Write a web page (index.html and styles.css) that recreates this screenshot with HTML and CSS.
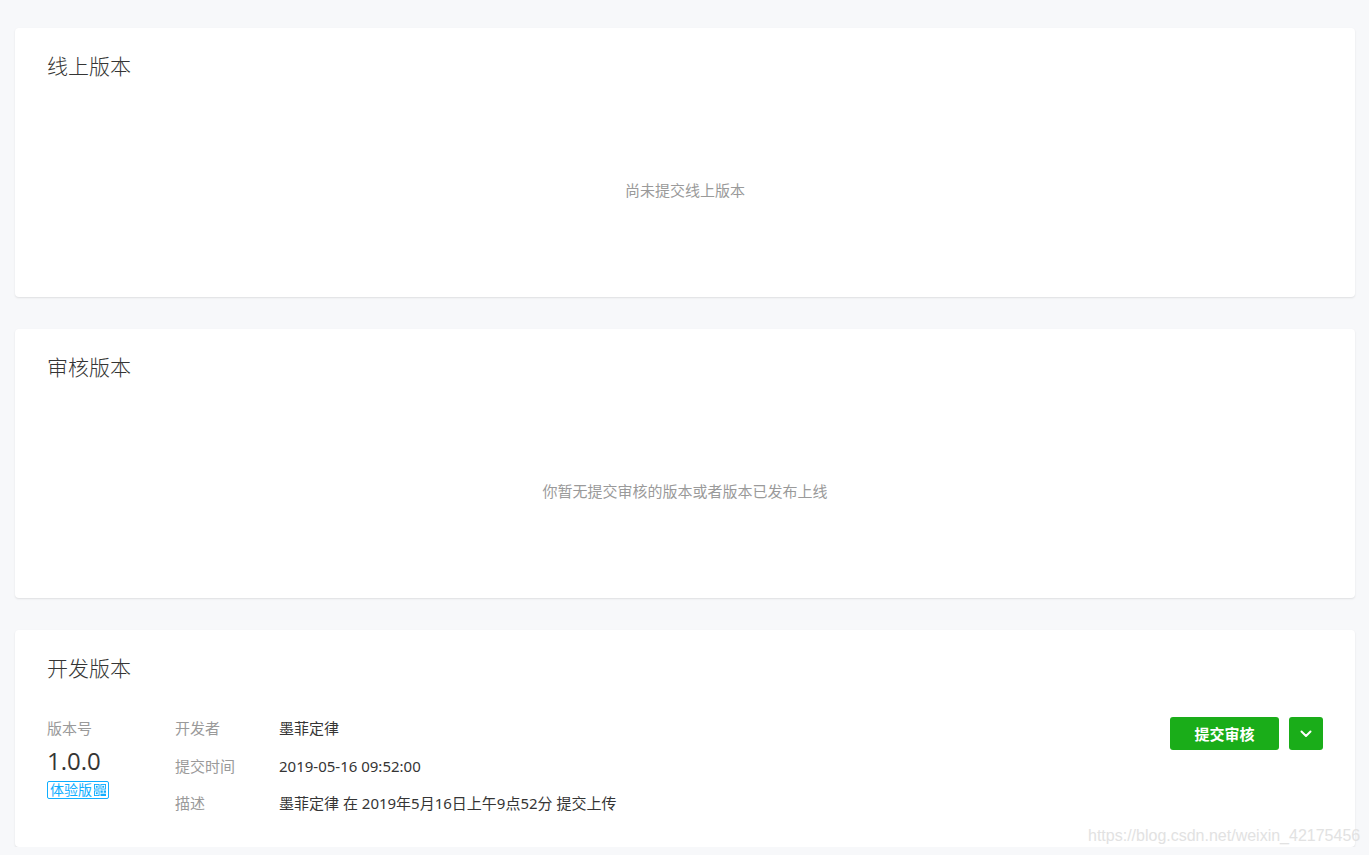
FILE: index.html
```html
<!DOCTYPE html>
<html lang="zh-CN">
<head>
<meta charset="utf-8">
<title>版本管理</title>
<link rel="stylesheet" href="styles.css">
</head>
<body>
<main class="page">
  <section class="card">
    <h2 class="card-title">线上版本</h2>
    <div class="empty">尚未提交线上版本</div>
  </section>
  <section class="card">
    <h2 class="card-title">审核版本</h2>
    <div class="empty">你暂无提交审核的版本或者版本已发布上线</div>
  </section>
  <section class="card card-dev">
    <h2 class="card-title">开发版本</h2>
    <div class="dev">
      <div class="ver">
        <div class="label">版本号</div>
        <div class="ver-num">1.0.0</div>
        <span class="badge">体验版
          <svg class="qr" width="12" height="12" viewBox="0 0 13 13">
            <rect x="0.5" y="0.5" width="5" height="5" fill="none" stroke="#10aeff" stroke-width="1"/>
            <rect x="7.5" y="0.5" width="5" height="5" fill="none" stroke="#10aeff" stroke-width="1"/>
            <rect x="0.5" y="7.5" width="5" height="5" fill="none" stroke="#10aeff" stroke-width="1"/>
            <rect x="2" y="2" width="2" height="2" fill="#10aeff"/>
            <rect x="9" y="2" width="2" height="2" fill="#10aeff"/>
            <rect x="2" y="9" width="2" height="2" fill="#10aeff"/>
            <rect x="7" y="7" width="2.5" height="2.5" fill="#10aeff"/>
            <rect x="10.5" y="7" width="2.5" height="2.5" fill="#10aeff"/>
            <rect x="7" y="10.5" width="6" height="2.5" fill="#10aeff"/>
          </svg>
        </span>
      </div>
      <dl class="meta">
        <dt>开发者</dt><dd>墨菲定律</dd>
        <dt>提交时间</dt><dd>2019-05-16 09:52:00</dd>
        <dt>描述</dt><dd>墨菲定律 在 2019年5月16日上午9点52分 提交上传</dd>
      </dl>
      <div class="actions">
        <button class="btn btn-primary">提交审核</button>
        <button class="btn btn-drop" aria-label="更多">
          <svg width="12" height="8" viewBox="0 0 12 8"><path d="M1.5 1.5 L6 6 L10.5 1.5" fill="none" stroke="#fff" stroke-width="2" stroke-linecap="round" stroke-linejoin="round"/></svg>
        </button>
      </div>
    </div>
  </section>
</main>
<div class="watermark">https://blog.csdn.net/weixin_42175456</div>
</body>
</html>
```
FILE: styles.css
```css
* { box-sizing: border-box; }
html, body { margin: 0; padding: 0; }
body {
  background: #f7f8fa;
  font-family: "Noto Sans", "Noto Sans CJK SC", sans-serif;
  color: #353535;
  font-size: 15px;
}
.page {
  padding: 28px 14px 0 15px;
  display: flex;
  flex-direction: column;
  gap: 32px;
}
.card {
  background: #fff;
  border-radius: 4px;
  box-shadow: 0 1px 2px rgba(0,0,0,0.10);
  padding: 23px 32px 0;
  height: 269px;
  display: flex;
  flex-direction: column;
}
.card-dev { height: 217px; }
.card-title {
  margin: 0;
  font-size: 21px;
  font-weight: 300;
  line-height: 30px;
  color: #353535;
}
.empty {
  flex: 1;
  display: flex;
  align-items: center;
  justify-content: center;
  color: #9a9a9a;
  font-size: 15px;
  padding-top: 1px;
}
.dev {
  margin-top: 34px;
  display: flex;
  align-items: flex-start;
}
.ver {
  width: 128px;
  display: flex;
  flex-direction: column;
  align-items: flex-start;
}
.label, .meta dt {
  color: #9a9a9a;
  line-height: 22px;
}
.ver-num {
  font-family: "Open Sans", "Noto Sans", sans-serif;
  font-size: 24px;
  font-weight: 400;
  line-height: 30px;
  margin-top: 7px;
  color: #353535;
}
.badge {
  display: flex;
  align-items: center;
  gap: 2px;
  height: 18px;
  padding: 0 2px;
  border: 1px solid #10aeff;
  border-radius: 2px;
  color: #10aeff;
  font-size: 14px;
  line-height: 16px;
  margin-top: 5px;
}
.qr { display: block; }
.meta {
  flex: 1;
  margin: 0;
  display: grid;
  grid-template-columns: 104px 1fr;
  grid-auto-rows: 22px;
  row-gap: 15.5px;
  line-height: 22px;
}
.meta dd { margin: 0; color: #353535; }
.actions {
  display: flex;
  gap: 10px;
}
.btn {
  border: 0;
  border-radius: 3px;
  background: #1aad19;
  color: #fff;
  height: 33px;
  font-family: inherit;
  cursor: pointer;
  padding: 0;
}
.btn-primary {
  width: 109px;
  font-size: 15px;
  font-weight: 700;
}
.btn-drop {
  width: 34px;
  display: flex;
  align-items: center;
  justify-content: center;
}
.watermark {
  position: absolute;
  left: 1088px;
  top: 826px;
  font-family: "Liberation Sans", Arial, sans-serif;
  font-size: 16px;
  line-height: 20px;
  color: #e2e2e2;
  white-space: nowrap;
}
```
